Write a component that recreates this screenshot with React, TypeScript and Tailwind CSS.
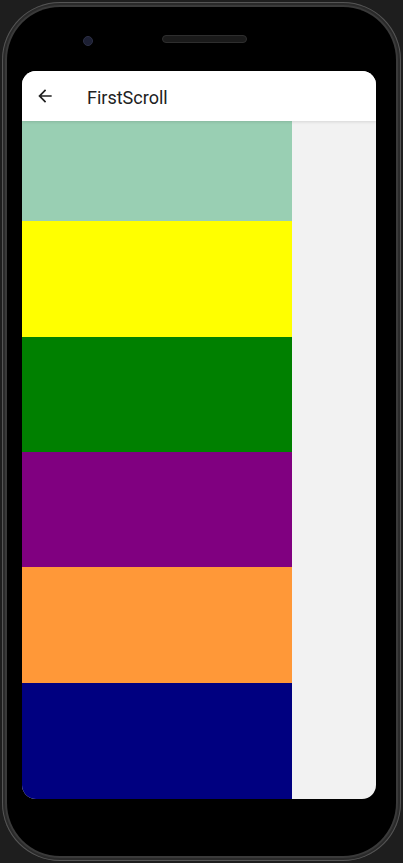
import React from "react";

const blocks = [
  { color: "bg-[#99cfb3]", h: "h-[100px]" },
  { color: "bg-[#ffff00]", h: "h-[116px]" },
  { color: "bg-[#008000]", h: "h-[115px]" },
  { color: "bg-[#800080]", h: "h-[115px]" },
  { color: "bg-[#ff9838]", h: "h-[116px]" },
  { color: "bg-[#000080]", h: "h-[116px]" },
];

const App: React.FC = () => {
  return (
    <div className="w-[403px] h-[863px] bg-[#1e1e1e] p-[2px] overflow-hidden">
      {/* Phone body */}
      <div className="w-[399px] h-[859px] rounded-[58px] bg-[#2a2a2a] p-[3px] shadow-[inset_0_0_0_1px_#555]">
        <div className="w-full h-full rounded-[55px] bg-[#3a3a3a] p-[2px]">
          <div className="w-full h-full rounded-[53px] bg-black flex flex-col">
            {/* Top bezel: camera + speaker */}
            <div className="h-[64px] flex items-start pt-[26px] pl-[76px]">
              <div className="w-[10px] h-[10px] rounded-full bg-[#1c1f33] border border-[#2c2f45] mt-[3px]" />
              <div className="ml-[69px] w-[85px] h-[8px] rounded-full bg-[#1a1a1a] border border-[#2e2e2e] mt-[2px]" />
            </div>
            {/* Screen */}
            <div className="ml-[15px] w-[354px] h-[728px] rounded-[14px] overflow-hidden bg-[#f2f2f2] flex flex-col">
              <div className="h-[50px] bg-white flex items-center shrink-0 shadow-[0_1px_3px_rgba(0,0,0,0.12)] z-10">
                <svg className="ml-[13px]" width="20" height="20" viewBox="0 0 24 24">
                  <path d="M20 11H7.83l5.59-5.59L12 4l-8 8 8 8 1.41-1.41L7.83 13H20v-2z" fill="#212121" />
                </svg>
                <span className="ml-[32px] mt-[2px] text-[18px] text-[#212121] font-['Roboto',sans-serif]">FirstScroll</span>
              </div>
              <div className="w-[270px] flex flex-col">
                {blocks.map((b, i) => (
                  <div key={i} className={`${b.color} ${b.h}`} />
                ))}
              </div>
            </div>
          </div>
        </div>
      </div>
    </div>
  );
};

export default App;
